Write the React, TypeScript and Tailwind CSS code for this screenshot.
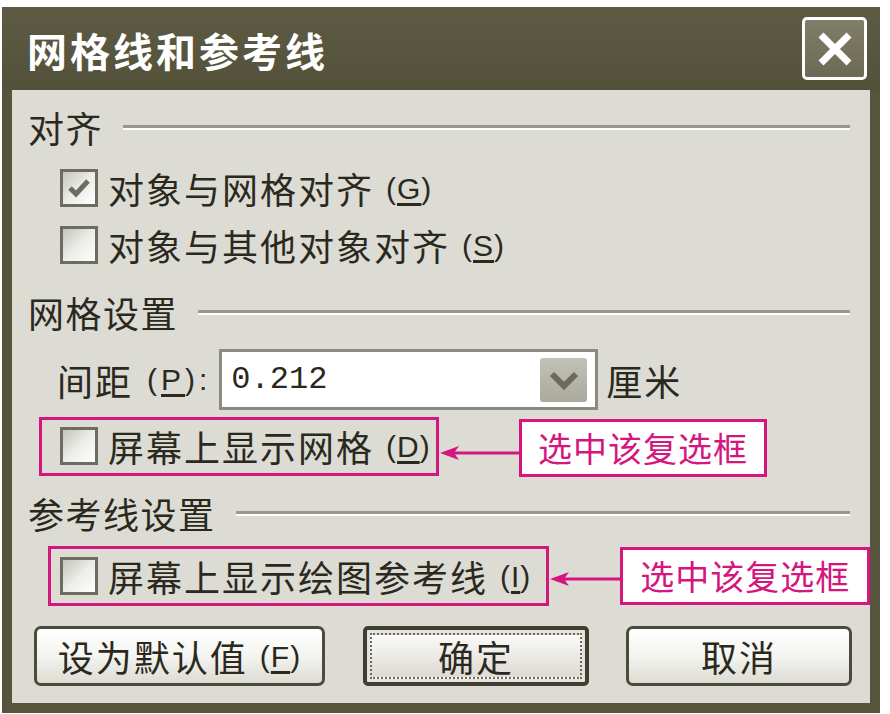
import React from "react";

const cjk = { fontFamily: '"Noto Sans CJK SC", "Noto Sans", sans-serif' };

function Checkbox({ checked = false }: { checked?: boolean }) {
  return (
    <div className="w-[38px] h-[38px] shrink-0 border-[3px] border-[#6e6c60] bg-gradient-to-br from-[#c4c4bc] via-[#ececE8] to-white flex items-center justify-center">
      {checked && (
        <svg width="24" height="20" viewBox="0 0 24 20">
          <path d="M3 10 L9 16 L21 3" fill="none" stroke="#6d6c60" strokeWidth="5" strokeLinejoin="miter" />
        </svg>
      )}
    </div>
  );
}

function Key({ k }: { k: string }) {
  return (
    <span className="ml-[12px] text-[30px] tracking-[1px]" style={{ fontFamily: '"Liberation Sans", sans-serif' }}>
      (<span className="underline underline-offset-4">{k}</span>)
    </span>
  );
}

function Section({ title, className = "" }: { title: string; className?: string }) {
  return (
    <div className={`h-[38px] ml-[16px] mr-[20px] flex items-center ${className}`}>
      <span className="text-[36px] leading-none tracking-[1.5px]">{title}</span>
      <div className="flex-1 ml-[20px] h-[5px] border-t-[3px] border-t-[#9a988e] border-b-2 border-b-white" />
    </div>
  );
}

function Arrow({ width }: { width: number }) {
  return (
    <svg width={width} height="20" viewBox={`0 0 ${width} 20`} className="shrink-0">
      <line x1="14" y1="10" x2={width} y2="10" stroke="#d4167e" strokeWidth="3" />
      <path d="M1 10 L20 3 L15 10 L20 17 Z" fill="#d4167e" />
    </svg>
  );
}

function Note() {
  return <span className="text-[34px] leading-none tracking-[1px] text-[#d4167e]">选中该复选框</span>;
}

export default function App() {
  return (
    <div className="w-[890px] h-[714px] bg-white overflow-hidden text-[#2b291d]" style={cjk}>
      <div className="ml-[2px] mt-[7px] w-[878px] h-[706px] bg-[#56543c] rounded-tr-[6px] flex flex-col">
        {/* title bar */}
        <div className="h-[83px] flex items-center justify-between pl-[25px] pr-[13px] bg-gradient-to-b from-[#5d5b43] to-[#535139]">
          <span className="text-[40px] font-bold text-white leading-none tracking-[3px] mt-[2px]">网格线和参考线</span>
          <div className="w-[65px] h-[63px] border-[3px] border-white rounded-[5px] bg-gradient-to-b from-[#807e68] to-[#6c6a54] flex items-center justify-center">
            <svg width="36" height="36" viewBox="0 0 36 36">
              <path d="M4 4 L32 32 M32 4 L4 32" stroke="white" strokeWidth="7" />
            </svg>
          </div>
        </div>

        {/* body */}
        <div className="ml-[10px] w-[858px] h-[613px] bg-[#dcdcd5] flex flex-col pt-[18px]">
          <Section title="对齐" />

          <div className="mt-[22px] ml-[48px] h-[40px] flex items-center">
            <Checkbox checked />
            <span className="ml-[10px] text-[36px] leading-none tracking-[2px]">对象与网格对齐</span>
            <Key k="G" />
          </div>

          <div className="mt-[17px] ml-[48px] h-[40px] flex items-center">
            <Checkbox />
            <span className="ml-[10px] text-[36px] leading-none tracking-[2px]">对象与其他对象对齐</span>
            <Key k="S" />
          </div>

          <Section title="网格设置" className="mt-[28px]" />

          <div className="mt-[18px] ml-[45px] h-[61px] flex items-center">
            <span className="text-[36px] leading-none tracking-[2px]">间距</span>
            <span className="ml-[14px] text-[30px] tracking-[4px]" style={{ fontFamily: '"Liberation Sans", sans-serif' }}>
              (<span className="underline underline-offset-4">P</span>):
            </span>
            <div className="ml-[8px] w-[379px] h-[61px] border-[3px] border-[#8c8b80] bg-white flex items-center pl-[9px] pr-[8px]">
              <span className="text-[32px] flex-1 text-[#2b291d]" style={{ fontFamily: '"Liberation Mono", monospace' }}>
                0.212
              </span>
              <div className="w-[47px] h-[44px] rounded-[3px] bg-gradient-to-b from-[#c2c2b6] to-[#a9a99c] flex items-center justify-center">
                <svg width="30" height="20" viewBox="0 0 30 20">
                  <path d="M3 4 L15 16 L27 4" fill="none" stroke="#6b6a5c" strokeWidth="6" />
                </svg>
              </div>
            </div>
            <span className="ml-[8px] text-[36px] leading-none tracking-[2px]">厘米</span>
          </div>

          <div className="mt-[5px] ml-[27px] flex items-center">
            <div className="w-[400px] h-[59px] border-[3px] border-[#d4167e] flex items-center pl-[18px]">
              <Checkbox />
              <span className="ml-[10px] text-[36px] leading-none tracking-[2px]">屏幕上显示网格</span>
              <Key k="D" />
            </div>
            <div className="mt-[14px]">
              <Arrow width={80} />
            </div>
            <div className="w-[248px] h-[58px] mt-[4px] border-[3px] border-[#d4167e] bg-white flex items-center justify-center">
              <Note />
            </div>
          </div>

          <Section title="参考线设置" className="mt-[17px]" />

          <div className="mt-[14px] ml-[36px] flex items-center">
            <div className="w-[502px] h-[60px] border-[3px] border-[#d4167e] flex items-center pl-[9px]">
              <Checkbox />
              <span className="ml-[10px] text-[36px] leading-none tracking-[2px]">屏幕上显示绘图参考线</span>
              <Key k="I" />
            </div>
            <div className="mt-[6px]">
              <Arrow width={71} />
            </div>
            <div className="w-[250px] h-[58px] border-[3px] border-[#d4167e] bg-white flex items-center justify-center">
              <Note />
            </div>
          </div>

          <div className="mt-[20px] ml-[22px] flex items-center">
            <div className="w-[291px] h-[60px] border-[3px] border-[#4b4a3c] rounded-[7px] bg-gradient-to-b from-white via-[#f4f4f0] to-[#dcdcd4] flex items-center justify-center">
              <span className="text-[36px] leading-none tracking-[2px]">设为默认值</span>
              <Key k="F" />
            </div>
            <div className="ml-[38px] w-[226px] h-[60px] border-[4px] border-[#3f3e31] rounded-[5px] bg-[#e4e4de] p-[3px]">
              <div className="w-full h-full border-2 border-dotted border-[#6b6a5c] bg-gradient-to-b from-[#fafaf8] to-[#dedad4] flex items-center justify-center">
                <span className="text-[36px] leading-none tracking-[2px]">确定</span>
              </div>
            </div>
            <div className="ml-[37px] w-[226px] h-[60px] border-[3px] border-[#4b4a3c] rounded-[7px] bg-gradient-to-b from-white via-[#f4f4f0] to-[#dcdcd4] flex items-center justify-center">
              <span className="text-[36px] leading-none tracking-[2px]">取消</span>
            </div>
          </div>
        </div>
      </div>
    </div>
  );
}
